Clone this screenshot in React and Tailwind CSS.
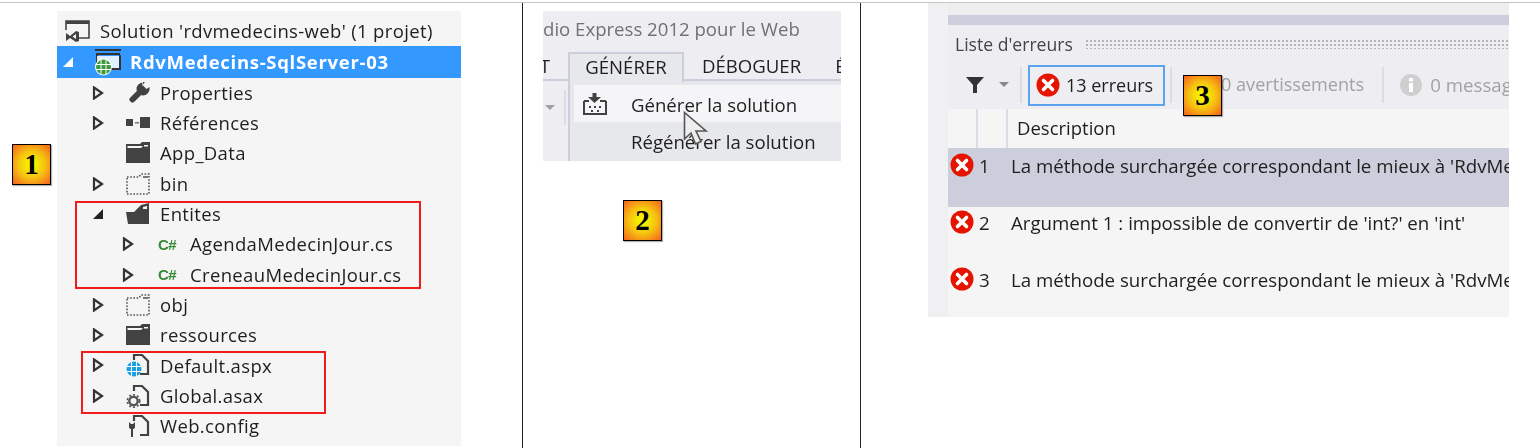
import React from "react";

const font = "font-['Open_Sans','Noto_Sans',sans-serif]";

function Caret({ open, white }) {
  if (open) {
    return (
      <svg width="12" height="12" viewBox="0 0 12 12" className="shrink-0">
        <polygon points="1,11 11,11 11,1" fill={white ? "#ffffff" : "#222222"} />
      </svg>
    );
  }
  return (
    <svg width="12" height="14" viewBox="0 0 12 14" className="shrink-0">
      <polygon points="2,1.5 10,7 2,12.5" fill="none" stroke="#333333" strokeWidth="2.2" />
    </svg>
  );
}

function NoCaret() {
  return <span className="w-[12px] shrink-0" />;
}

function WrenchIcon() {
  return (
    <svg width="21" height="21" viewBox="0 0 21 21" className="ml-[3px] shrink-0">
      <path d="M3.5 17.5 L11 10" stroke="#424242" strokeWidth="6" strokeLinecap="round" />
      <circle cx="14" cy="7" r="6.5" fill="#424242" />
      <polygon points="13,-1 22,-1 22,8 17,8 13,4.5" fill="#f5f5f5" />
      <polygon points="14,0 16,0 13.5,3 17.5,7 20.5,5 20.5,8 16,12 12,10" fill="#424242" />
    </svg>
  );
}

function FolderIcon({ open }) {
  return (
    <svg width="24" height="22" viewBox="0 0 24 22" className="shrink-0">
      {open ? (
        <path d="M0 9 H8 L15 2 L23 0 V21 H2 Z M17 4 L21 3 V6 H17 Z" fill="#424242" fillRule="evenodd" />
      ) : (
        <path d="M0 2 H14 L16 0 H24 V21 H0 Z M1.5 4 V6 H15 L17 4 Z M18 3 H22 V4.5 H18 Z" fill="#424242" fillRule="evenodd" />
      )}
    </svg>
  );
}

function DashedFolder() {
  return (
    <svg width="24" height="22" viewBox="0 0 24 22" className="shrink-0">
      <path d="M1 4 H13 L15 1 H23 V21 H1 Z" fill="none" stroke="#555555" strokeWidth="1.6" strokeDasharray="1.6 1.6" />
      <rect x="17" y="3" width="5" height="2" fill="#777777" />
    </svg>
  );
}

function RefIcon() {
  return (
    <svg width="24" height="12" viewBox="0 0 24 12" className="shrink-0">
      <rect x="0" y="2" width="7" height="7" fill="#424242" />
      <rect x="9" y="5" width="4" height="1.5" fill="#777777" />
      <rect x="14" y="0" width="10" height="11" fill="#424242" />
    </svg>
  );
}

function CsIcon() {
  return (
    <span className="w-[22px] shrink-0 text-[15px] leading-none font-bold tracking-[-0.5px] text-[#388a34] font-['Liberation_Sans',sans-serif]">
      C#
    </span>
  );
}

function GlobePath({ cx, cy, r, color }) {
  return (
    <g>
      <circle cx={cx} cy={cy} r={r} fill={color} />
      <path
        d={`M${cx - r} ${cy - r / 3} H${cx + r} M${cx - r} ${cy + r / 3} H${cx + r} M${cx - r / 3} ${cy - r} V${cy + r} M${cx + r / 3} ${cy - r} V${cy + r}`}
        stroke="#ffffff"
        strokeWidth="1"
      />
    </g>
  );
}

function PageOutline() {
  return <path d="M8 7 V2 H16 L22 8 V21 H14" fill="none" stroke="#424242" strokeWidth="2.2" />;
}

function DefaultIcon() {
  return (
    <svg width="24" height="24" viewBox="0 0 24 24" className="shrink-0">
      <PageOutline />
      <GlobePath cx={8} cy={16} r={7.5} color="#1ba1e2" />
    </svg>
  );
}

function GlobalIcon() {
  return (
    <svg width="24" height="24" viewBox="0 0 24 24" className="shrink-0">
      <PageOutline />
      <circle cx="7.5" cy="17" r="4.2" fill="none" stroke="#555555" strokeWidth="2.4" />
      <circle cx="7.5" cy="17" r="6.2" fill="none" stroke="#555555" strokeWidth="1.6" strokeDasharray="2 2" />
    </svg>
  );
}

function WebConfigIcon() {
  return (
    <svg width="24" height="24" viewBox="0 0 24 24" className="shrink-0">
      <PageOutline />
      <path d="M3 8 V13 Q3 15 6 15 Q9 15 9 13 V8 L7 10 H5 Z M5 15 H7 V23 H5 Z" fill="#424242" />
    </svg>
  );
}

function SolutionIcon() {
  return (
    <svg width="26" height="24" viewBox="0 0 26 24" className="shrink-0">
      <path d="M1 11 V2 H24 V19 H14" fill="none" stroke="#424242" strokeWidth="1.6" />
      <rect x="1" y="2" width="23" height="3" fill="#424242" />
      <path d="M1 14 L5 17 L11 12 L14 13 V22 L11 23 L5 19 L1 22 Z M11 15 L7.5 17.5 L11 20 Z" fill="#424242" fillRule="evenodd" />
    </svg>
  );
}

function ProjectIcon() {
  return (
    <svg width="28" height="28" viewBox="0 0 28 28" className="shrink-0">
      <rect x="1" y="1" width="26" height="2" fill="#333333" />
      <rect x="2" y="5" width="24" height="2" fill="#333333" />
      <path d="M3 7 V21 H26 V7" fill="none" stroke="#333333" strokeWidth="2" />
      <rect x="3" y="8" width="22" height="12" fill="#ffffff" fillOpacity="0.85" />
      <circle cx="9.5" cy="19" r="8.5" fill="#ffffff" />
      <GlobePath cx={9.5} cy={19} r={7.5} color="#3a9a3f" />
    </svg>
  );
}

function ErrorIcon() {
  return (
    <svg width="24" height="24" viewBox="0 0 24 24" className="shrink-0">
      <circle cx="12" cy="12" r="11.5" fill="#e51400" />
      <path d="M7.5 7.5 L16.5 16.5 M16.5 7.5 L7.5 16.5" stroke="#ffffff" strokeWidth="3.6" strokeLinecap="round" />
    </svg>
  );
}

function Row({ depth, selected, caret, icon, children }) {
  return (
    <div
      className={
        selected
          ? "flex h-[31.6px] items-center bg-[#3399ff] pl-[5px] text-white font-bold tracking-[0.7px]"
          : depth === 2
            ? "flex h-[30.3px] items-center pl-[65px]"
            : "flex h-[30.3px] items-center pl-[35px]"
      }
    >
      {caret}
      <span
        className={
          selected
            ? "ml-[20px] flex w-[36px] items-center"
            : depth === 2
              ? "ml-[24px] flex w-[32px] items-center"
              : "ml-[22px] flex w-[34px] items-center"
        }
      >
        {icon}
      </span>
      <span className="whitespace-nowrap">{children}</span>
    </div>
  );
}

function Badge({ n, className }) {
  return (
    <div
      className={
        "absolute flex h-[41px] w-[39px] items-center justify-center border border-black bg-[radial-gradient(circle,#f5f000_15%,#f6c211_50%,#f5601f_100%)] font-['Liberation_Serif',serif] text-[29px] font-bold leading-none text-black shadow-[1px_1px_1px_rgba(0,0,0,0.3)] " +
        className
      }
    >
      {n}
    </div>
  );
}

function Tree() {
  return (
    <div className={"w-[404px] h-[435px] bg-[#f5f5f5] pt-[5px] text-[18.5px] text-[#1e1e1e] tracking-[0.35px] blur-[0.4px] " + font}>
      <div className="flex h-[30px] items-center pl-[8px]">
        <SolutionIcon />
        <span className="ml-[9px] whitespace-nowrap">Solution 'rdvmedecins-web' (1 projet)</span>
      </div>
      <Row selected caret={<Caret open white />} icon={<ProjectIcon />}>RdvMedecins-SqlServer-03</Row>
      <Row caret={<Caret />} icon={<WrenchIcon />}>Properties</Row>
      <Row caret={<Caret />} icon={<RefIcon />}>Références</Row>
      <Row caret={<NoCaret />} icon={<FolderIcon />}>App_Data</Row>
      <Row caret={<Caret />} icon={<DashedFolder />}>bin</Row>
      <Row caret={<Caret open />} icon={<FolderIcon open />}>Entites</Row>
      <Row depth={2} caret={<Caret />} icon={<CsIcon />}>AgendaMedecinJour.cs</Row>
      <Row depth={2} caret={<Caret />} icon={<CsIcon />}>CreneauMedecinJour.cs</Row>
      <Row caret={<Caret />} icon={<DashedFolder />}>obj</Row>
      <Row caret={<Caret />} icon={<FolderIcon />}>ressources</Row>
      <Row caret={<Caret />} icon={<DefaultIcon />}>Default.aspx</Row>
      <Row caret={<Caret />} icon={<GlobalIcon />}>Global.asax</Row>
      <Row caret={<NoCaret />} icon={<WebConfigIcon />}>Web.config</Row>
    </div>
  );
}

function BuildPanel() {
  return (
    <div className={"relative h-[150px] w-[298px] overflow-hidden bg-[#eeeef2] text-[18.6px] text-[#1e1e1e] blur-[0.4px] " + font}>
      <div className="h-[41px] whitespace-nowrap pt-[4px] text-[#717171]">dio Express 2012 pour le Web</div>
      <div className="flex h-[29px] border-b-2 border-[#cccedb]">
        <div className="flex h-[27px] w-[25px] shrink-0 items-center justify-end overflow-hidden pr-[18px]">T</div>
        <div className="z-10 flex h-[30px] w-[116px] shrink-0 items-center justify-center border-x-2 border-t-2 border-[#cccedb] bg-[#e7e8ec] pb-[3px]">GÉNÉRER</div>
        <div className="ml-[18px] flex h-[27px] items-center">DÉBOGUER</div>
        <div className="ml-[34px] flex h-[27px] items-center">É</div>
      </div>
      <div className="flex h-[80px]">
        <div className="flex w-[25px] items-start pt-[9px]">
          <div className="flex h-[35px] w-full items-center">
            <svg width="10" height="6" viewBox="0 0 10 6" className="ml-[2px]"><polygon points="0,0 10,0 5,5" fill="#a0a0a0" /></svg>
            <span className="ml-[9px] h-full w-[2px] bg-[#dcdce2]" />
          </div>
        </div>
        <div className="flex-1 border-l-2 border-[#cccedb] bg-[#e7e8ec] pl-[4px] pt-[4px]">
          <div className="flex h-[37px] items-center bg-[#f5f5f8] pl-[8px]">
            <svg width="26" height="24" viewBox="0 0 26 24" className="shrink-0">
              <path d="M10.5 1 H14.5 V5 H19 L12.5 11 L6 5 H10.5 Z" fill="#424242" />
              <path d="M2 9 V22 H24 V9 M2 9 H7 M18 9 H24" fill="none" stroke="#424242" strokeWidth="2" />
              <path d="M7 14 h2 v2 h-2 Z M12 14 h2 v2 h-2 Z M17 14 h2 v2 h-2 Z M9 18 h2 v2 h-2 Z M15 18 h2 v2 h-2 Z" fill="#424242" />
            </svg>
            <span className="ml-[23px] whitespace-nowrap pt-[2px]">Générer la solution</span>
          </div>
          <div className="flex h-[37px] items-center pl-[57px] pt-[2px] whitespace-nowrap">Régénérer la solution</div>
        </div>
      </div>
      <svg width="26" height="36" viewBox="0 0 26 36" className="absolute left-[140px] top-[100px]">
        <path d="M1.5 1.5 V28 L8 22 L12.5 33 L18 30.5 L13 20 H23 Z" fill="#eeeeee" stroke="#555555" strokeWidth="1.6" />
      </svg>
    </div>
  );
}

function Sep({ className }) {
  return <span className={"w-[2px] h-[36px] shrink-0 bg-[#dcdce2] " + className} />;
}

function ErrorRow({ n, children, selected }) {
  return (
    <div className={selected ? "flex h-[59px] bg-[#cccedb] pl-[2px] pt-[5px]" : "flex h-[57px] pl-[2px] pt-[3px]"}>
      <ErrorIcon />
      <span className="ml-[5px] w-[32px] shrink-0 -mt-[1px]">{n}</span>
      <span className="whitespace-nowrap -mt-[1px]">{children}</span>
    </div>
  );
}

function ErrorList() {
  return (
    <div className={"h-[315px] w-[581px] overflow-hidden bg-[#f0f0f3] pl-[20px] text-[18.7px] text-[#1e1e1e] blur-[0.4px] " + font}>
      <div className="h-[13px] bg-[#eeeeee]" />
      <div className="h-[10px] bg-[#cccedb]" />
      <div className="h-[36px] bg-[#eeeef2] flex items-center pl-[7px] pt-[2px]">
        <span className="whitespace-nowrap text-[#444444] text-[17.6px]">Liste d'erreurs</span>
        <span className="ml-[12px] h-[10px] flex-1 bg-[radial-gradient(#b4b4b8_1px,transparent_1px)] bg-[length:4px_4px]" />
      </div>
      <div className="flex h-[48px] items-center bg-[#eeeef2]">
        <svg width="18" height="18" viewBox="0 0 18 18" className="ml-[18px] shrink-0">
          <path d="M0 1 H18 L11 9 V17 H7 V9 Z" fill="#333333" />
        </svg>
        <svg width="10" height="6" viewBox="0 0 10 6" className="ml-[15px] shrink-0"><polygon points="0,0 10,0 5,5" fill="#888888" /></svg>
        <Sep className="ml-[11px]" />
        <div className="ml-[6px] flex h-[41px] w-[137px] shrink-0 items-center border-2 border-[#5aa3ee] pl-[6px] text-[18px]">
          <ErrorIcon />
          <span className="ml-[6px] whitespace-nowrap">13 erreurs</span>
        </div>
        <Sep className="ml-[5px]" />
        <span className="ml-[49px] whitespace-nowrap text-[18.1px] text-[#a2a2a2]">0 avertissements</span>
        <Sep className="ml-[18px]" />
        <svg width="22" height="22" viewBox="0 0 22 22" className="ml-[16px] shrink-0">
          <circle cx="11" cy="11" r="11" fill="#cfcfcf" />
          <rect x="9" y="9" width="4" height="9" fill="#ffffff" />
          <rect x="9" y="4" width="4" height="3.5" fill="#ffffff" />
        </svg>
        <span className="ml-[8px] whitespace-nowrap text-[#a2a2a2]">0 messages</span>
      </div>
      <div className="flex h-[39px] items-center bg-[#f5f5f5]">
        <span className="ml-[28px] h-full w-[2px] bg-[#dcdce6]" />
        <span className="ml-[28px] h-full w-[2px] bg-[#dcdce6]" />
        <span className="ml-[9px] pb-[2px] text-[18.5px]">Description</span>
      </div>
      <div className="bg-[#f5f5f5] h-[170px]">
        <ErrorRow n="1" selected>La méthode surchargée correspondant le mieux à 'RdvMedecins</ErrorRow>
        <ErrorRow n="2">Argument 1 : impossible de convertir de 'int?' en 'int'</ErrorRow>
        <ErrorRow n="3">La méthode surchargée correspondant le mieux à 'RdvMedecins</ErrorRow>
      </div>
    </div>
  );
}

export default function App() {
  return (
    <div className="relative mt-[2px] flex h-[446px] w-[1540px] overflow-hidden border-t border-[#c4c4c4] bg-white">
      <div className="relative h-full w-[523px] shrink-0 border-r border-[#222222] pl-[57px] pt-[8px]">
        <Tree />
        <div className="absolute left-[75px] top-[198px] h-[88px] w-[346px] border-2 border-[#f01c1c]" />
        <div className="absolute left-[81px] top-[348px] h-[63px] w-[245px] border-2 border-[#f01c1c]" />
        <Badge n="1" className="left-[12px] top-[141px]" />
      </div>
      <div className="relative h-full w-[338px] shrink-0 border-r border-[#222222] pl-[20px] pt-[8px]">
        <BuildPanel />
        <Badge n="2" className="left-[100px] top-[197px]" />
      </div>
      <div className="relative h-full flex-1">
        <div className="absolute left-[67px] top-[-1px]">
          <ErrorList />
        </div>
        <Badge n="3" className="left-[322px] top-[72px]" />
      </div>
    </div>
  );
}
